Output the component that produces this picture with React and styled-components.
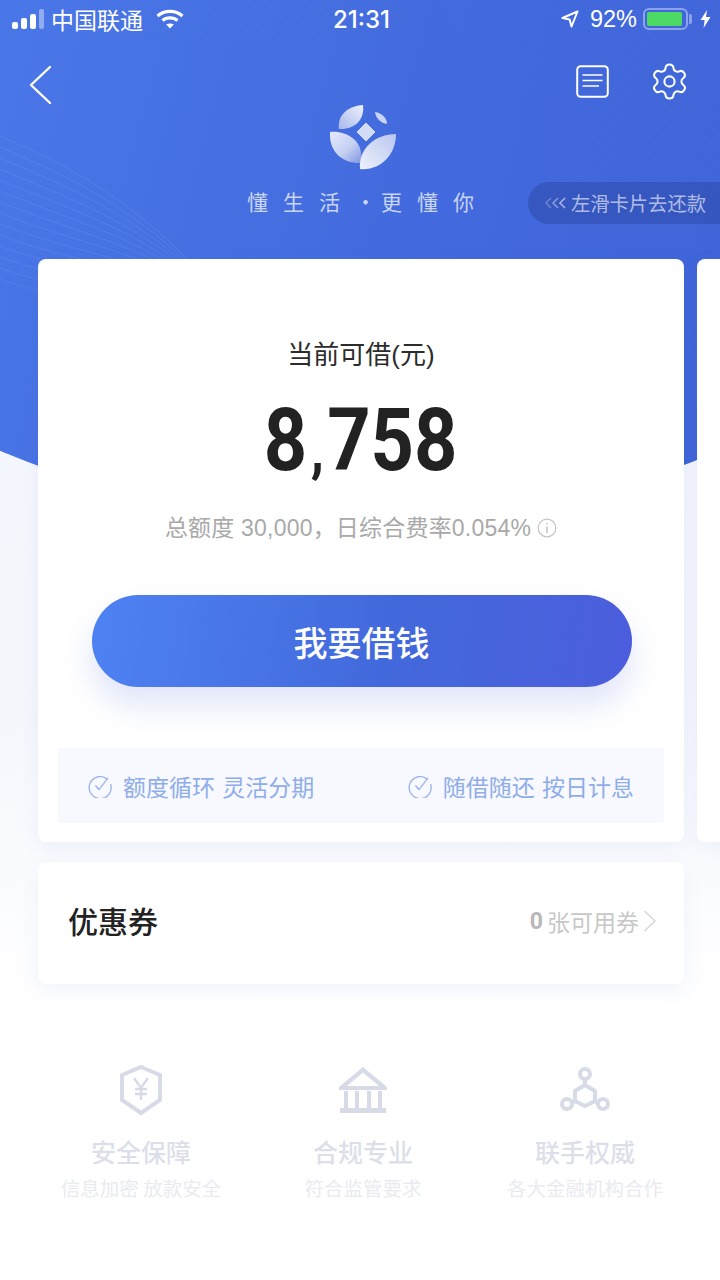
import React from "react";
import styled, { createGlobalStyle } from "styled-components";
import { Settings } from "lucide-react";

const GlobalStyle = createGlobalStyle`
  html, body {
    margin: 0;
    padding: 0;
    background: #fff;
  }
  * {
    box-sizing: border-box;
  }
  body {
    font-family: "Noto Sans CJK SC", "Noto Sans", sans-serif;
  }
`;

const features = [
  { title: "安全保障", desc: "信息加密 放款安全", icon: "shield" },
  { title: "合规专业", desc: "符合监管要求", icon: "bank" },
  { title: "联手权威", desc: "各大金融机构合作", icon: "nodes" },
];

const SignalBars = () => (
  <svg width="32" height="20" viewBox="0 0 32 20">
    <rect x="0" y="13" width="6" height="7" rx="2" fill="#fff" />
    <rect x="9" y="9" width="6" height="11" rx="2" fill="#fff" />
    <rect x="18" y="5" width="6" height="15" rx="2" fill="#fff" />
    <rect x="27" y="0" width="5" height="20" rx="2" fill="#fff" opacity="0.4" />
  </svg>
);

const Wifi = () => (
  <svg width="28" height="20" viewBox="0 0 28 20" fill="none" stroke="#fff" strokeWidth="3.2">
    <path d="M1.5 7 C8.5 0.8 19.5 0.8 26.5 7" />
    <path d="M6.5 11.5 C10.5 8 17.5 8 21.5 11.5" />
    <path d="M14 19.5 L10.2 15.6 C12.4 14 15.6 14 17.8 15.6 Z" fill="#fff" stroke="none" />
  </svg>
);

const LocationArrow = () => (
  <svg width="18" height="18" viewBox="0 0 18 18" fill="none" stroke="#fff" strokeWidth="2" strokeLinejoin="round">
    <path d="M16.5 1.5 L1.5 8 L8.6 9.6 L10.5 16.5 Z" />
  </svg>
);

const Bolt = () => (
  <svg width="11" height="18" viewBox="0 0 11 18">
    <path d="M7 0 L0.5 10 L4.6 10 L3.6 18 L10.5 7 L6 7 Z" fill="#fff" />
  </svg>
);

const BackIcon = () => (
  <svg width="24" height="40" viewBox="0 0 24 40" fill="none" stroke="#fff" strokeWidth="2.4" strokeLinecap="round" strokeLinejoin="round">
    <path d="M21 2 L2 20 L21 38" />
  </svg>
);

const BillIcon = () => (
  <svg width="33" height="33" viewBox="0 0 33 33" fill="none" stroke="#fff" strokeWidth="2">
    <rect x="1.2" y="1.2" width="30.6" height="30.6" rx="3.5" />
    <path d="M6.5 10 H26.5 M6.5 15.5 H26.5 M6.5 21 H23" strokeWidth="1.7" />
  </svg>
);

const BrandLogo = () => (
  <svg width="68" height="66" viewBox="0 0 68 66">
    <defs>
      <linearGradient id="leafLeft" x1="0" y1="0" x2="1" y2="1">
        <stop offset="0" stopColor="#e4e9fb" />
        <stop offset="0.55" stopColor="#c6d1f3" />
        <stop offset="1" stopColor="#7f97e0" />
      </linearGradient>
      <linearGradient id="leafRight" x1="1" y1="0" x2="0" y2="1">
        <stop offset="0" stopColor="#b9c7ef" />
        <stop offset="1" stopColor="#eef1fc" />
      </linearGradient>
      <linearGradient id="leafTop" x1="1" y1="0" x2="0" y2="1">
        <stop offset="0" stopColor="#eef1fc" />
        <stop offset="1" stopColor="#a6b7ea" />
      </linearGradient>
    </defs>
    <path d="M0 27 C18 25 36 38 30 58 C10 58 -1 45 0 27 Z" fill="url(#leafLeft)" />
    <path d="M66 29 C45 29 28 44 30 64 C50 66 66 50 66 29 Z" fill="url(#leafRight)" />
    <path d="M33 0 C17 1 7 11 9 24 C24 25 35 15 33 0 Z" fill="url(#leafTop)" />
    <path d="M45 7 C52 8 57 13 57 19 C51 18 46 14 45 7 Z" fill="#c9d4f4" />
    <path d="M36 18 L45 27 L36 36 L27 27 Z" fill="#d3dcf6" stroke="#d3dcf6" strokeWidth="1" strokeLinejoin="round" />
  </svg>
);

const HintChevrons = () => (
  <svg width="22" height="12" viewBox="0 0 22 12" fill="none" stroke="#fff" strokeWidth="1.6">
    <path d="M6 1 L1 6 L6 11" strokeOpacity="0.25" />
    <path d="M13 1 L8 6 L13 11" strokeOpacity="0.4" />
    <path d="M20 1 L15 6 L20 11" strokeOpacity="0.55" />
  </svg>
);

const InfoIcon = () => (
  <svg width="20" height="20" viewBox="0 0 20 20" fill="none" stroke="#c4c4c4" strokeWidth="1.2">
    <circle cx="10" cy="10" r="8.8" />
    <path d="M10 8.6 V15 M10 5 V6.6" strokeWidth="1.5" />
  </svg>
);

const CheckIcon = () => (
  <svg width="24" height="24" viewBox="0 0 24 24" fill="none" stroke="#8fadea" strokeWidth="1.2">
    <path d="M19.6 5.4 A11 11 0 1 0 22.6 10" />
    <path d="M7.5 11.5 L11 15.5 L20 4" />
  </svg>
);

const ChevronRight = () => (
  <svg width="14" height="24" viewBox="0 0 14 24" fill="none" stroke="#d6d6d6" strokeWidth="1.4">
    <path d="M1.5 2 L12 12 L1.5 22" />
  </svg>
);

const ShieldIcon = () => (
  <svg width="44" height="52" viewBox="0 0 44 52" fill="none" stroke="#d6dbe7" strokeWidth="4">
    <path d="M22 3 L41 11 V36 L22 49 L3 36 V11 Z" />
    <path d="M15 14 L22 24 L29 14 M22 24 V36 M16 25 H28 M16 30 H28" strokeWidth="2.4" />
  </svg>
);

const BankIcon = () => (
  <svg width="48" height="46" viewBox="0 0 48 46" fill="#d6dbe7">
    <path d="M24 0 L48 20 V23 H0 V20 Z M24 5.5 L8 19 H40 Z" fillRule="evenodd" />
    <rect x="5" y="24" width="4" height="17" />
    <rect x="16" y="24" width="4" height="17" />
    <rect x="28" y="24" width="4" height="17" />
    <rect x="39" y="24" width="4" height="17" />
    <rect x="1" y="41" width="46" height="5" />
  </svg>
);

const NodesIcon = () => (
  <svg width="52" height="48" viewBox="0 0 52 48" fill="none" stroke="#d6dbe7" strokeWidth="4">
    <circle cx="26" cy="8" r="5" />
    <circle cx="8" cy="38" r="5" />
    <circle cx="44" cy="38" r="5" />
    <path d="M26 13 V19 M26 19 L36 25 V35 L26 40 L16 35 V25 Z M16 35 L12.5 37 M36 35 L39.5 37" strokeLinejoin="round" />
  </svg>
);

const featureIcons = { shield: ShieldIcon, bank: BankIcon, nodes: NodesIcon };

// hairlines printed on the blue header
const HeroLines = () => {
  const curves = Array.from({ length: 14 }, (_, i) => i);
  return (
    <HeroArt viewBox="0 0 720 480">
      {curves.map((i) => (
        <path
          key={i}
          d={`M-10 ${132 + i * 11} C 70 ${165 + i * 11}, 130 ${200 + i * 7}, 190 ${262 + i * 3}`}
          stroke="#fff"
          strokeOpacity="0.07"
          fill="none"
        />
      ))}
      {curves.map((i) => (
        <path
          key={`t${i}`}
          d={`M${150 + i * 14} 40 L${270 + i * 14} -40`}
          stroke="#fff"
          strokeOpacity="0.03"
          fill="none"
        />
      ))}
      {curves.map((i) => (
        <path
          key={`r${i}`}
          d={`M${440 + i * 14} 0 L${620 + i * 14} 220`}
          stroke="#fff"
          strokeOpacity="0.03"
          fill="none"
        />
      ))}
    </HeroArt>
  );
};

const App = () => {
  return (
    <>
      <GlobalStyle />
      <Page>
        <Hero>
          <HeroLines />
        </Hero>

        <StatusBar>
          <StatusGroup>
            <SignalBars />
            <Carrier>中国联通</Carrier>
            <Wifi />
          </StatusGroup>
          <Clock>21:31</Clock>
          <StatusGroup $right>
            <LocationArrow />
            <Percent>92%</Percent>
            <Battery>
              <BatteryFill />
            </Battery>
            <Bolt />
          </StatusGroup>
        </StatusBar>

        <NavBar>
          <BackIcon />
          <NavActions>
            <BillIcon />
            <Settings size={41} color="#fff" strokeWidth={1.2} />
          </NavActions>
        </NavBar>

        <Brand>
          <BrandLogo />
          <Slogan>
            懂生活<SloganDot>·</SloganDot>更懂你
          </Slogan>
          <SwipeHint>
            <HintChevrons />
            左滑卡片去还款
          </SwipeHint>
        </Brand>

        <Carousel>
          <LoanCard>
            <CardLabel>当前可借(元)</CardLabel>
            <Amount>
              8<AmountComma>,</AmountComma>758
            </Amount>
            <Summary>
              总额度 30,000，日综合费率0.054%
              <InfoIcon />
            </Summary>
            <BorrowButton>我要借钱</BorrowButton>
            <Perks>
              <Perk>
                <CheckIcon />
                额度循环 灵活分期
              </Perk>
              <Perk>
                <CheckIcon />
                随借随还 按日计息
              </Perk>
            </Perks>
          </LoanCard>
          <NextCard />
        </Carousel>

        <CouponCard>
          <CouponTitle>优惠券</CouponTitle>
          <CouponInfo>
            <CouponCount>0</CouponCount>
            张可用券
            <ChevronRight />
          </CouponInfo>
        </CouponCard>

        <Features>
          {features.map((item) => {
            const Icon = featureIcons[item.icon];
            return (
              <Feature key={item.title}>
                <FeatureIcon>
                  <Icon />
                </FeatureIcon>
                <FeatureTitle>{item.title}</FeatureTitle>
                <FeatureDesc>{item.desc}</FeatureDesc>
              </Feature>
            );
          })}
        </Features>
      </Page>
    </>
  );
};

export default App;

const Page = styled.div`
  position: relative;
  width: 720px;
  height: 1280px;
  overflow: hidden;
  background: linear-gradient(180deg, #f3f5fd 0, #f5f7fd 720px, #fff 1010px);
`;

const Hero = styled.div`
  position: absolute;
  top: 0;
  left: 0;
  width: 720px;
  height: 524px;
  clip-path: circle(920px at 360px -396px);
  background: linear-gradient(105deg, #4a77e7 0, #4269dd 60%, #3f64d8 100%);
`;

const HeroArt = styled.svg`
  display: block;
  width: 720px;
  height: 480px;
`;

const StatusBar = styled.div`
  position: relative;
  display: grid;
  grid-template-columns: 1fr auto 1fr;
  align-items: center;
  height: 38px;
  padding: 0 9px 0 12px;
  color: #fff;
`;

const StatusGroup = styled.div`
  display: flex;
  align-items: center;
  justify-content: ${(p) => (p.$right ? "flex-end" : "flex-start")};
  gap: ${(p) => (p.$right ? "6px" : "7px")};
`;

const Carrier = styled.span`
  font-size: 23px;
  margin-right: 6px;
`;

const Clock = styled.span`
  font-family: "Inter", "Liberation Sans", sans-serif;
  font-size: 24px;
  font-weight: 500;
`;

const Percent = styled.span`
  font-family: "Liberation Sans", sans-serif;
  font-size: 23.5px;
  margin-left: 5px;
`;

const Battery = styled.div`
  position: relative;
  width: 45px;
  height: 22px;
  margin-right: 6px;
  padding: 2px;
  border: 2px solid rgba(255, 255, 255, 0.4);
  border-radius: 6px;

  &::after {
    content: "";
    position: absolute;
    top: 4px;
    right: -6px;
    width: 3px;
    height: 10px;
    border-radius: 0 2px 2px 0;
    background: rgba(255, 255, 255, 0.4);
  }
`;

const BatteryFill = styled.div`
  width: 94%;
  height: 100%;
  border-radius: 2px;
  background: #4cd964;
`;

const NavBar = styled.div`
  position: relative;
  display: flex;
  align-items: center;
  justify-content: space-between;
  height: 40px;
  margin-top: 27px;
  padding: 0 30px 0 29px;
`;

const NavActions = styled.div`
  display: flex;
  align-items: center;
  gap: 40px;
  padding-bottom: 8px;
`;

const Brand = styled.div`
  position: relative;
  display: flex;
  flex-direction: column;
  align-items: center;
  height: 154px;
  padding-left: 8px;
`;

const Slogan = styled.div`
  margin: 15px 0 0 8px;
  font-size: 21px;
  line-height: 30px;
  letter-spacing: 15px;
  color: rgba(255, 255, 255, 0.72);
  white-space: pre;
`;

const SloganDot = styled.span`
  display: inline-block;
  width: 11px;
  margin-right: 15px;
  letter-spacing: 0;
  text-align: center;
`;

const SwipeHint = styled.div`
  position: absolute;
  top: 77px;
  right: 0;
  display: flex;
  align-items: center;
  gap: 4px;
  width: 192px;
  height: 42px;
  padding-left: 17px;
  border-radius: 21px 0 0 21px;
  background: rgba(45, 75, 170, 0.55);
  font-size: 19.3px;
  color: rgba(255, 255, 255, 0.62);
  white-space: nowrap;
`;

const Carousel = styled.div`
  position: relative;
  display: flex;
  gap: 13px;
  padding-left: 38px;
`;

const LoanCard = styled.div`
  flex: 0 0 646px;
  display: flex;
  flex-direction: column;
  align-items: center;
  height: 583px;
  padding: 76px 20px 20px;
  border-radius: 8px;
  background: #fff;
  box-shadow: 0 6px 20px rgba(90, 115, 200, 0.08);
`;

const NextCard = styled.div`
  flex: 0 0 646px;
  height: 583px;
  border-radius: 8px;
  background: #fff;
  box-shadow: 0 6px 20px rgba(90, 115, 200, 0.08);
`;

const CardLabel = styled.div`
  font-family: "Liberation Sans", "Noto Sans CJK SC", sans-serif;
  font-size: 26px;
  line-height: 40px;
  color: #2c2c2c;
`;

const Amount = styled.div`
  margin-top: 15px;
  font-family: "Roboto", "Liberation Sans", sans-serif;
  font-size: 88px;
  font-weight: 700;
  line-height: 100px;
  color: #222;
  transform: scaleX(0.86);
`;

const AmountComma = styled.span`
  margin: 0 4px;
  font-size: 62px;
  line-height: 0;
`;

const Summary = styled.div`
  display: flex;
  align-items: center;
  gap: 6px;
  margin-top: 22px;
  font-family: "Liberation Sans", "Noto Sans CJK SC", sans-serif;
  font-size: 23px;
  letter-spacing: 0.2px;
  line-height: 32px;
  color: #a9a9a9;
`;

const BorrowButton = styled.button`
  flex: none;
  width: 540px;
  height: 92px;
  margin: 51px 0 0 1px;
  border: 0;
  border-radius: 46px;
  background: linear-gradient(100deg, #4e82f3 0, #4269db 55%, #4c5ddd 100%);
  box-shadow: 0 18px 30px rgba(70, 100, 220, 0.17);
  font-family: inherit;
  font-size: 34px;
  font-weight: 500;
  color: #fff;
`;

const Perks = styled.div`
  display: flex;
  flex: none;
  align-items: center;
  justify-content: space-between;
  align-self: stretch;
  height: 75px;
  margin-top: 61px;
  padding: 0 30px;
  border-radius: 2px;
  background: #f7f9fe;
`;

const Perk = styled.div`
  display: flex;
  align-items: center;
  gap: 11px;
  font-size: 23px;
  word-spacing: 2px;
  color: #8fadea;
`;

const CouponCard = styled.div`
  position: relative;
  display: flex;
  align-items: center;
  justify-content: space-between;
  width: 646px;
  height: 122px;
  margin: 20px 0 0 38px;
  padding: 0 27px 0 30px;
  border-radius: 8px;
  background: #fff;
  box-shadow: 0 6px 20px rgba(90, 115, 200, 0.08);
`;

const CouponTitle = styled.div`
  padding-bottom: 6px;
  font-size: 30px;
  font-weight: 500;
  color: #222;
`;

const CouponInfo = styled.div`
  display: flex;
  align-items: center;
  gap: 4px;
  padding-bottom: 4px;
  font-size: 23px;
  color: #c8c8c8;
`;

const CouponCount = styled.span`
  font-family: "Roboto", sans-serif;
  font-weight: 700;
  color: #b8b8b8;
`;

const Features = styled.div`
  position: relative;
  display: grid;
  grid-template-columns: 222px 222px 222px;
  padding: 78px 0 0 30px;
`;

const Feature = styled.div`
  display: flex;
  flex-direction: column;
  align-items: center;
`;

const FeatureIcon = styled.div`
  display: flex;
  align-items: center;
  justify-content: center;
  height: 56px;
`;

const FeatureTitle = styled.div`
  margin-top: 15px;
  font-size: 25px;
  font-weight: 500;
  line-height: 36px;
  color: #dcdfe9;
`;

const FeatureDesc = styled.div`
  margin-top: 5px;
  font-size: 19.5px;
  line-height: 28px;
  color: #e9ebf1;
`;
